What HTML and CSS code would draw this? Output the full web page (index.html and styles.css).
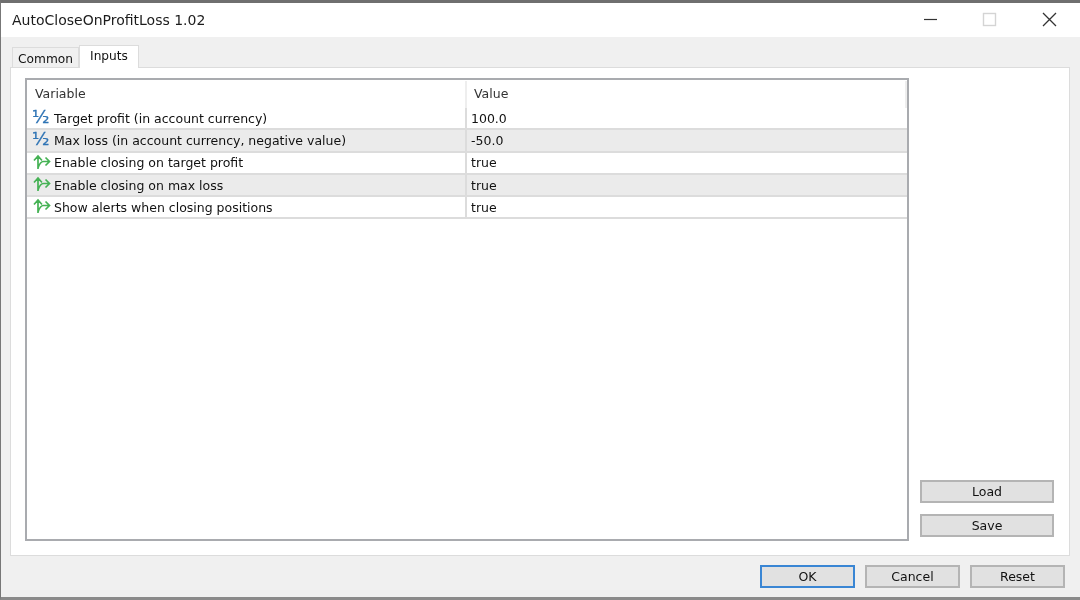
FILE: index.html
```html
<!DOCTYPE html>
<html lang="en">
<head>
<meta charset="utf-8">
<title>AutoCloseOnProfitLoss 1.02</title>
<link rel="stylesheet" href="styles.css">
</head>
<body>
<div class="window">
  <header class="titlebar">
    <span class="title">AutoCloseOnProfitLoss 1.02</span>
    <div class="controls">
      <svg class="ctl" width="46" height="34" viewBox="0 0 46 34"><path d="M18 16.500H31" stroke="#333" stroke-width="1.2"/></svg>
      <svg class="ctl" width="46" height="34" viewBox="0 0 46 34"><rect x="17.5" y="10.500" width="12" height="12" fill="none" stroke="#d4d4d4" stroke-width="1.4"/></svg>
      <svg class="ctl" width="46" height="34" viewBox="0 0 46 34"><path d="M17 10L30 23M30 10L17 23" stroke="#333" stroke-width="1.3"/></svg>
    </div>
  </header>
  <main class="client">
    <div class="tabs">
      <div class="tab">Common</div>
      <div class="tab active">Inputs</div>
    </div>
    <section class="panel">
      <div class="listbox">
        <div class="row head"><div class="c1">Variable</div><div class="c2">Value</div></div>
        <div class="row"><div class="c1"><span class="half">½</span>Target profit (in account currency)</div><div class="c2">100.0</div></div>
        <div class="row alt"><div class="c1"><span class="half">½</span>Max loss (in account currency, negative value)</div><div class="c2">-50.0</div></div>
        <div class="row"><div class="c1"><svg class="bool" width="21" height="16" viewBox="0 0 21 16"><path d="M5.500 15V2.500M1.500 6.500L5.500 2L9.500 6.500M5.500 14C6.500 11 8.500 7.500 11 7.500H17M13 3.500L17 7.500L13 11.500" fill="none" stroke="#45b254" stroke-width="1.700"/></svg>Enable closing on target profit</div><div class="c2">true</div></div>
        <div class="row alt"><div class="c1"><svg class="bool" width="21" height="16" viewBox="0 0 21 16"><path d="M5.500 15V2.500M1.500 6.500L5.500 2L9.500 6.500M5.500 14C6.500 11 8.500 7.500 11 7.500H17M13 3.500L17 7.500L13 11.500" fill="none" stroke="#45b254" stroke-width="1.700"/></svg>Enable closing on max loss</div><div class="c2">true</div></div>
        <div class="row"><div class="c1"><svg class="bool" width="21" height="16" viewBox="0 0 21 16"><path d="M5.500 15V2.500M1.500 6.500L5.500 2L9.500 6.500M5.500 14C6.500 11 8.500 7.500 11 7.500H17M13 3.500L17 7.500L13 11.500" fill="none" stroke="#45b254" stroke-width="1.700"/></svg>Show alerts when closing positions</div><div class="c2">true</div></div>
      </div>
      <aside class="side">
        <button class="btn wide">Load</button>
        <button class="btn wide">Save</button>
      </aside>
    </section>
    <footer class="actions">
      <button class="btn ok">OK</button>
      <button class="btn">Cancel</button>
      <button class="btn">Reset</button>
    </footer>
  </main>
</div>
</body>
</html>
```

FILE: styles.css
```css
* { box-sizing: border-box; }
html, body { margin: 0; height: 100%; background: #fff; }
body { overflow: hidden; }
.window {
  width: 1080px;
  height: 600px;
  display: flex;
  flex-direction: column;
  border-top: 3px solid #6f6f6f;
  border-left: 1px solid #777;
  border-bottom: 3px solid #8a8a8a;
  font-family: "DejaVu Sans", sans-serif;
  font-size: 12.500px;
  color: #111;
  filter: blur(0.3px);
}
.titlebar {
  height: 34px;
  flex: none;
  background: #fff;
  display: flex;
  align-items: center;
  justify-content: space-between;
  padding: 0 8px 0 11px;
}
.title { font-size: 14px; color: #1c1c1c; }
.controls { display: flex; gap: 14px; }
.ctl { display: block; }
.client {
  flex: 1;
  background: #f0f0f0;
  display: flex;
  flex-direction: column;
  padding: 7px 9px 0 9px;
}
.tabs { display: flex; align-items: flex-end; height: 23px; padding-left: 2px; flex: none; }
.tab {
  width: 67px;
  height: 20px;
  background: #f0f0f0;
  border: 1px solid #dcdcdc;
  border-bottom: 0;
  display: flex;
  align-items: center;
  justify-content: center;
  padding-top: 2px;
  font-size: 12.200px;
}
.tab.active {
  width: 60px;
  height: 23px;
  background: #fff;
  padding-top: 0;
  padding-bottom: 2px;
  margin-bottom: -1px;
  position: relative;
}
.panel {
  height: 489px;
  flex: none;
  background: #fff;
  border: 1px solid #dcdcdc;
  display: flex;
  padding: 10px 15px 14px 14px;
  gap: 11px;
  width: 1060px;
}
.listbox {
  width: 884px;
  height: 463px;
  border: 2px solid #a9abaf;
  background: #fff;
  flex: none;
  padding-top: 1px;
}
.row {
  display: flex;
  height: 22.300px;
  border-bottom: 2px solid #dcdcdc;
  align-items: center;
}
.row.alt { background: #ebebeb; }
.row.head { height: 27px; border-bottom: 0; color: #333; }
.c1 {
  width: 440px;
  flex: none;
  height: 100%;
  display: flex;
  align-items: center;
  border-right: 2px solid #dcdcdc;
  padding-left: 5px;
  white-space: nowrap;
}
.c2 { padding-left: 4px; flex: 1; }
.head .c1 { padding-left: 8px; padding-bottom: 3px; border-right-color: #eeeeee; }
.head .c2 {
  padding-left: 7px;
  padding-bottom: 3px;
  height: 100%;
  display: flex;
  align-items: center;
  border-right: 2px solid #eeeeee;
}
.half {
  width: 22px;
  flex: none;
  font-size: 18px;
  line-height: 1;
  color: #2f74b5;
  -webkit-text-stroke: 0.3px #2f74b5;
  margin-top: -2px;
}
.bool { width: 22px; flex: none; margin-top: -2px; }
.side {
  flex: 1;
  display: flex;
  flex-direction: column;
  justify-content: flex-end;
  gap: 11px;
  padding-bottom: 4px;
}
.btn {
  width: 95px;
  height: 23px;
  background: #e1e1e1;
  border: 2px solid #b4b4b4;
  font: inherit;
  color: #111;
  padding: 0;
}
.btn.wide { width: 134px; }
.btn.ok { border-color: #3a86d4; }
.actions {
  display: flex;
  justify-content: flex-end;
  gap: 10px;
  padding: 9px 6px 0 0;
}
```
